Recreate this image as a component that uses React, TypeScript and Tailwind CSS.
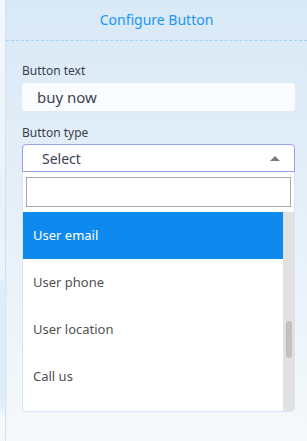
import React from 'react';

const options = ['User email', 'User phone', 'User location', 'Call us'];

export default function App() {
  return (
    <div className="flex h-[441px] w-[307px] overflow-hidden" style={{ fontFamily: '"Noto Sans", "Open Sans", sans-serif' }}>
      {/* left strip */}
      <div className="relative w-[6px] border-r border-[#cfe2f3] bg-gradient-to-b from-[#f3f8fc] via-[#e8f2fb] to-[#f4f8fb]">
        <div className="absolute left-0 top-[280px] h-[130px] w-[5px] bg-[#d6e9f9] blur-[2px]" />
      </div>

      {/* panel */}
      <div className="flex flex-1 flex-col bg-gradient-to-b from-[#d9e9f6] via-[#e6f0f8] to-[#f6f9fa]">
        <div className="flex h-[41px] items-center justify-center border-b border-dashed border-[#a4d3f6] pb-[2px]">
          <span className="text-[14px] text-[#2196f3]">Configure Button</span>
        </div>

        <div className="flex flex-col pl-[16px] pr-[12px] pt-[22px]">
          <label className="text-[12px] leading-[16px] text-[#3a3f4a]">Button text</label>
          <div className="mt-[4px] flex h-[28px] items-center rounded-[4px] bg-[#fbfcff] pl-[15px] text-[15px] text-[#3d4250]">
            buy now
          </div>

          <label className="mt-[14px] text-[12px] leading-[16px] text-[#3a3f4a]">Button type</label>
          <div className="mt-[3px] flex flex-col">
            <div className="flex h-[28px] items-center justify-between rounded-t-[4px] border border-[#9a9ef0] bg-white pl-[19px] pr-[14px]">
              <span className="text-[14px] text-[#3d4250]">Select</span>
              <span className="h-0 w-0 border-x-[5px] border-b-[5px] border-x-transparent border-b-[#7a7a7a]" />
            </div>
            <div className="flex h-[240px] flex-col overflow-hidden rounded-b-[4px] border-x border-b border-[#dbe2f6] bg-white">
              <div className="px-[3px] pt-[5px] pb-[5px]">
                <div className="h-[30px] border border-[#a9a9a9] bg-white" />
              </div>
              <div className="flex flex-1 overflow-hidden">
                <div className="flex flex-1 flex-col">
                  {options.map((o, i) => (
                    <div
                      key={o}
                      className={`flex h-[47px] shrink-0 items-center pl-[10px] text-[13px] ${i === 0 ? 'bg-[#0e8aee] text-white' : 'text-[#505050]'}`}
                    >
                      {o}
                    </div>
                  ))}
                </div>
                <div className="relative w-[11px] bg-[#e1e1e1]">
                  <div className="absolute left-[3px] top-[109px] h-[37px] w-[6px] rounded-[3px] bg-[#c1c1c1]" />
                </div>
              </div>
            </div>
          </div>
        </div>
      </div>
    </div>
  );
}
